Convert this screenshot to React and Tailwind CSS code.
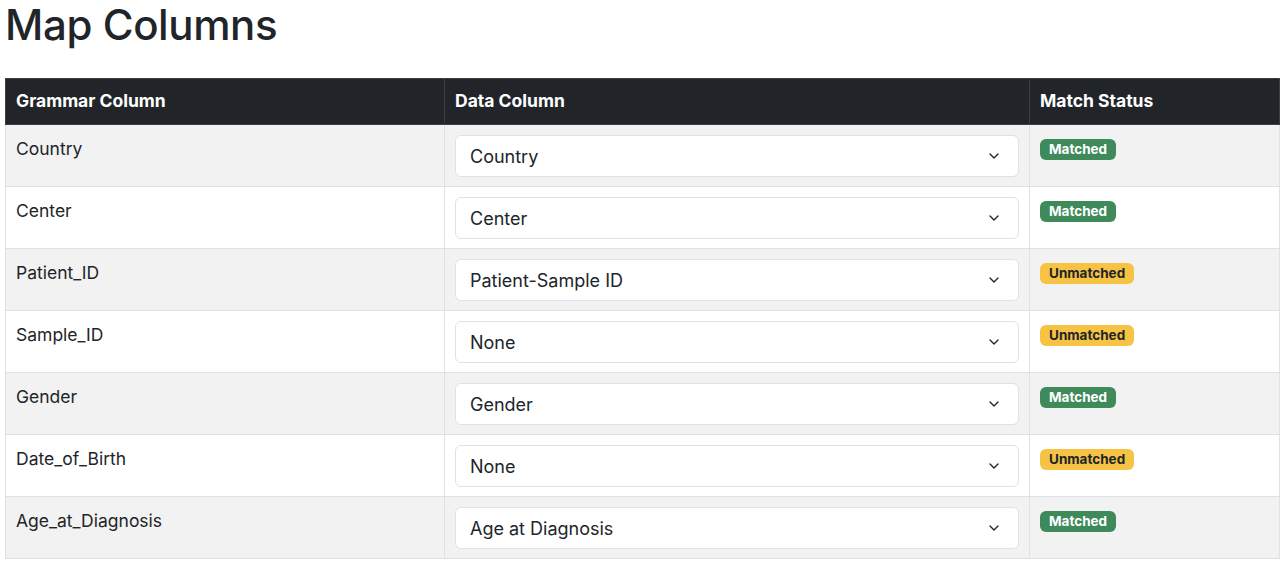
import { ChevronDown } from 'lucide-react';

const rows = [
  { grammar: 'Country', data: 'Country', matched: true },
  { grammar: 'Center', data: 'Center', matched: true },
  { grammar: 'Patient_ID', data: 'Patient-Sample ID', matched: false },
  { grammar: 'Sample_ID', data: 'None', matched: false },
  { grammar: 'Gender', data: 'Gender', matched: true },
  { grammar: 'Date_of_Birth', data: 'None', matched: false },
  { grammar: 'Age_at_Diagnosis', data: 'Age at Diagnosis', matched: true },
];

function StatusBadge({ matched }) {
  return matched ? (
    <span className="block w-fit rounded-[6px] bg-[#3e8a5a] px-[9px] py-[2px] text-[13.5px] font-bold leading-[17px] text-white">
      Matched
    </span>
  ) : (
    <span className="block w-fit rounded-[6px] bg-[#f6c344] px-[9px] py-[2px] text-[13.5px] font-bold leading-[17px] text-[#212529]">
      Unmatched
    </span>
  );
}

export default function App() {
  return (
    <div className="min-h-screen bg-white pl-[5px] pr-[8px] text-[#212529]" style={{ fontFamily: 'Inter, "Liberation Sans", sans-serif' }}>
      <h1 className="pt-[1px] text-[42px] font-medium leading-[48px] tracking-[-0.4px]">Map Columns</h1>

      <table className="mt-[29px] w-full table-fixed border-collapse text-[17.5px]">
        <colgroup>
          <col className="w-[439px]" />
          <col className="w-[585px]" />
          <col />
        </colgroup>
        <thead>
          <tr className="bg-[#212529] text-left text-white">
            <th className="h-[46px] border border-[#3a3f44] px-[10px] text-[17.5px] font-bold">Grammar Column</th>
            <th className="h-[46px] border border-[#3a3f44] px-[10px] text-[17.5px] font-bold">Data Column</th>
            <th className="h-[46px] border border-[#3a3f44] px-[10px] text-[17.5px] font-bold">Match Status</th>
          </tr>
        </thead>
        <tbody>
          {rows.map((row, i) => (
            <tr key={row.grammar} className={i % 2 === 0 ? 'bg-[#f2f2f2]' : 'bg-white'}>
              <td className="border border-[#dee2e6] px-[10px] pt-[11px] align-top">{row.grammar}</td>
              <td className="border border-[#dee2e6] px-[10px] pt-[10px] pb-[9px] align-top">
                <div className="flex h-[42px] items-center justify-between rounded-[6px] border border-[#dee2e6] bg-white pl-[14px] pr-[16px] text-[18px]">
                  <span>{row.data}</span>
                  <ChevronDown className="h-[16px] w-[16px]" strokeWidth={2} />
                </div>
              </td>
              <td className="border border-[#dee2e6] px-[10px] pt-[14px] align-top">
                <StatusBadge matched={row.matched} />
              </td>
            </tr>
          ))}
        </tbody>
      </table>
    </div>
  );
}
